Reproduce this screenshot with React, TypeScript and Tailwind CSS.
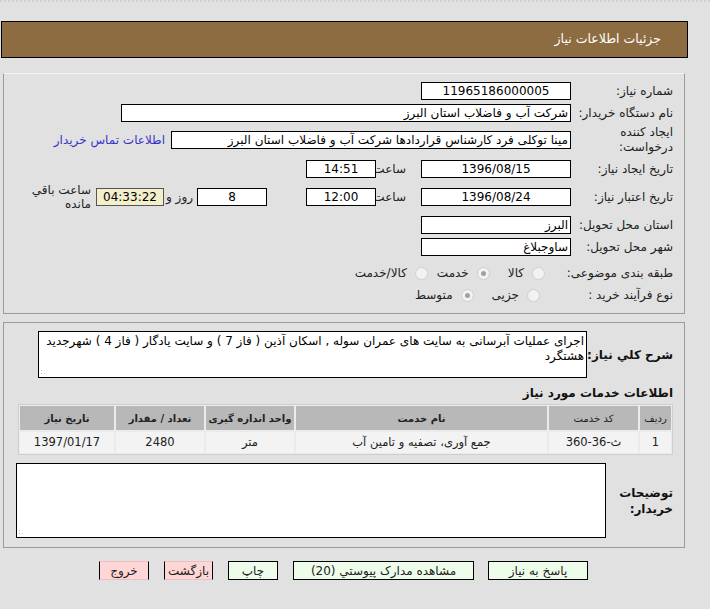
type RadioProps = { checked?: boolean; className?: string };

function Radio({ checked, className = "" }: RadioProps) {
  return (
    <span
      className={`w-[13px] h-[13px] shrink-0 rounded-full border border-[#cfcfcf] bg-[#f2f2f2] flex items-center justify-center ${className}`}
    >
      {checked && <span className="w-[5px] h-[5px] rounded-full bg-[#a0a0a0]"></span>}
    </span>
  );
}

const box = "h-[18px] shrink-0 bg-white border border-black flex items-center text-[12px] leading-none text-black";

function Label({ children, className = "" }: { children: React.ReactNode; className?: string }) {
  return <div className={`w-[102px] shrink-0 text-[12px] text-[#222] leading-[15px] ${className}`}>{children}</div>;
}

function Grip() {
  return (
    <svg className="absolute left-[2px] bottom-[2px]" width="6" height="6" viewBox="0 0 6 6">
      <rect x="0" y="1" width="1" height="1" fill="#bbb" />
      <rect x="0" y="4" width="1" height="1" fill="#bbb" />
      <rect x="3" y="4" width="1" height="1" fill="#bbb" />
    </svg>
  );
}

const cols = [
  { h: "ردیف", v: "1", bold: false },
  { h: "کد خدمت", v: "ث-36-360", bold: false },
  { h: "نام خدمت", v: "جمع آوری، تصفیه و تامین آب", bold: true },
  { h: "واحد اندازه گیری", v: "متر", bold: true },
  { h: "تعداد / مقدار", v: "2480", bold: true },
  { h: "تاریخ نیاز", v: "1397/01/17", bold: true },
];

export default function App() {
  return (
    <div className="w-[710px] h-[609px] bg-[#e1e1e1] overflow-hidden font-['Tahoma','DejaVu_Sans',sans-serif] text-[12px]">
      <div className="h-[3px] border-t-2 border-dotted border-[#cfcfcf]"></div>

      {/* header */}
      <div dir="rtl" className="mt-[18px] ml-[1px] w-[687px] h-[37px] bg-[#8c6c40] border border-black flex items-center pr-[26px]">
        <span className="text-white text-[12.5px]">جزئیات اطلاعات نیاز</span>
      </div>

      {/* main info panel */}
      <div dir="rtl" className="mt-[15px] ml-[3px] w-[682px] h-[241px] border border-[#9a9a9a] border-t-[#f4f4f4] pr-[11px] pt-[8px]">
        <div className="flex items-center h-[18px]">
          <Label>شماره نیاز:</Label>
          <div className={`${box} w-[150px] justify-center`}>11965186000005</div>
        </div>

        <div className="flex items-center h-[18px] mt-[4px]">
          <Label>نام دستگاه خریدار:</Label>
          <div className={`${box} w-[450px] pr-[2px]`}>شرکت آب و فاضلاب استان البرز</div>
        </div>

        <div className="flex items-center h-[32px] mt-[2px]">
          <Label>
            ایجاد کننده
            <br />
            درخواست:
          </Label>
          <div className={`${box} w-[400px] pr-[2px] overflow-hidden whitespace-nowrap`}>
            مینا توکلی فرد کارشناس قراردادها شرکت آب و فاضلاب استان البرز
          </div>
          <span className="mr-[6px] text-[#3535c8] whitespace-nowrap">اطلاعات تماس خریدار</span>
        </div>

        <div className="flex items-center h-[18px] mt-[4px]">
          <Label>تاریخ ایجاد نیاز:</Label>
          <div className={`${box} w-[150px] justify-center`}>1396/08/15</div>
          <span className="mr-[15px] w-[28px] text-[#222]">ساعت</span>
          <div className={`${box} mr-[2px] w-[70px] justify-center`}>14:51</div>
        </div>

        <div className="flex items-center h-[28px] mt-[5px]">
          <Label>تاریخ اعتبار نیاز:</Label>
          <div className={`${box} w-[150px] justify-center`}>1396/08/24</div>
          <span className="mr-[15px] w-[28px] text-[#222]">ساعت</span>
          <div className={`${box} mr-[2px] w-[70px] justify-center`}>12:00</div>
          <div className={`${box} mr-[39px] w-[70px] justify-center`}>8</div>
          <span className="mr-[4px] w-[27px] text-[#222] whitespace-nowrap">روز و</span>
          <div className="h-[18px] mr-[2px] w-[68px] bg-[#f3efcb] border border-[#555] flex items-center justify-center text-[12px] leading-none">
            04:33:22
          </div>
          <div className="mr-[5px] text-[#222] leading-[14px] text-right">
            ساعت باقي
            <br />
            مانده
          </div>
        </div>

        <div className="flex items-center h-[18px] mt-[5px]">
          <Label>استان محل تحویل:</Label>
          <div className={`${box} w-[150px] pr-[2px]`}>البرز</div>
        </div>

        <div className="flex items-center h-[18px] mt-[4px]">
          <Label>شهر محل تحویل:</Label>
          <div className={`${box} w-[150px] pr-[2px]`}>ساوجبلاغ</div>
        </div>

        <div className="flex items-center h-[18px] mt-[8px] text-[#222]">
          <Label className="whitespace-nowrap text-[11px]">طبقه بندی موضوعی:</Label>
          <Radio className="mr-[26px]" />
          <span className="mr-[8px]">کالا</span>
          <Radio checked className="mr-[18px]" />
          <span className="mr-[8px]">خدمت</span>
          <Radio className="mr-[9px]" />
          <span className="mr-[8px]">کالا/خدمت</span>
        </div>

        <div className="flex items-center h-[18px] mt-[4px] text-[#222]">
          <Label className="whitespace-nowrap">نوع فرآیند خرید :</Label>
          <Radio className="mr-[31px]" />
          <span className="mr-[8px]">جزیی</span>
          <Radio checked className="mr-[18px]" />
          <span className="mr-[8px]">متوسط</span>
        </div>
      </div>

      {/* description panel */}
      <div dir="rtl" className="mt-[8px] ml-[3px] w-[682px] h-[226px] border border-[#9a9a9a] pr-[11px] pt-[8px]">
        <div className="flex items-center">
          <div className="w-[86px] shrink-0 font-bold text-[12px] text-[#111] whitespace-nowrap">شرح کلي نیاز:</div>
          <div className="relative w-[549px] h-[47px] bg-white border border-black pr-[2px] pl-[6px] pt-[2px] text-[12px] leading-[15px] text-black">
            اجرای عملیات آبرسانی به سایت های عمران سوله , اسکان آذین ( فاز 7 ) و سایت یادگار ( فاز 4 ) شهرجدید هشتگرد
            <Grip />
          </div>
        </div>

        <div className="mt-[7px] h-[16px] font-bold text-[12px] text-[#111] leading-[16px]">اطلاعات خدمات مورد نیاز</div>

        <div className="mt-[3px] w-[655px] border border-[#cfcfcf] p-[1px] bg-[#ebebeb]">
          <div className="grid grid-cols-[31px_89px_251px_88px_88px_94px] gap-[2px]">
            {cols.map((c) => (
              <div
                key={c.h}
                className={`h-[24px] bg-[#b8b8b8] flex items-center justify-center text-[10px] text-[#222] whitespace-nowrap overflow-hidden ${c.bold ? "font-bold" : ""}`}
              >
                {c.h}
              </div>
            ))}
            {cols.map((c) => (
              <div key={c.h + "v"} className="h-[21px] bg-[#f3f3f3] flex items-center justify-center text-[11.5px] text-[#222]">
                {c.v}
              </div>
            ))}
          </div>
        </div>

        <div className="flex items-center mt-[8px]">
          <div className="w-[67px] shrink-0 font-bold text-[12px] text-[#111] leading-[16px]">
            توضیحات
            <br />
            خریدار:
          </div>
          <div className="relative w-[590px] h-[75px] bg-white border border-black">
            <Grip />
          </div>
        </div>
      </div>

      {/* buttons */}
      <div dir="rtl" className="mt-[13px] pr-[122px] flex items-center text-[12px] text-[#222]">
        <div className="w-[100px] h-[19px] bg-[#eefdea] border border-black flex items-center justify-center">پاسخ به نیاز</div>
        <div className="mr-[14px] w-[181px] h-[19px] bg-[#eefdea] border border-black flex items-center justify-center">
          مشاهده مدارک پیوستي (20)
        </div>
        <div className="mr-[15px] w-[50px] h-[19px] bg-[#eefdea] border border-black flex items-center justify-center">چاپ</div>
        <div className="mr-[15px] w-[49px] h-[19px] bg-[#ffd6d6] border-x border-black border-y border-y-[#f0c0c0] flex items-center justify-center">
          بازگشت
        </div>
        <div className="mr-[15px] w-[50px] h-[19px] bg-[#ffd6d6] border-x border-black border-y border-y-[#f0c0c0] flex items-center justify-center">
          خروج
        </div>
      </div>
    </div>
  );
}
